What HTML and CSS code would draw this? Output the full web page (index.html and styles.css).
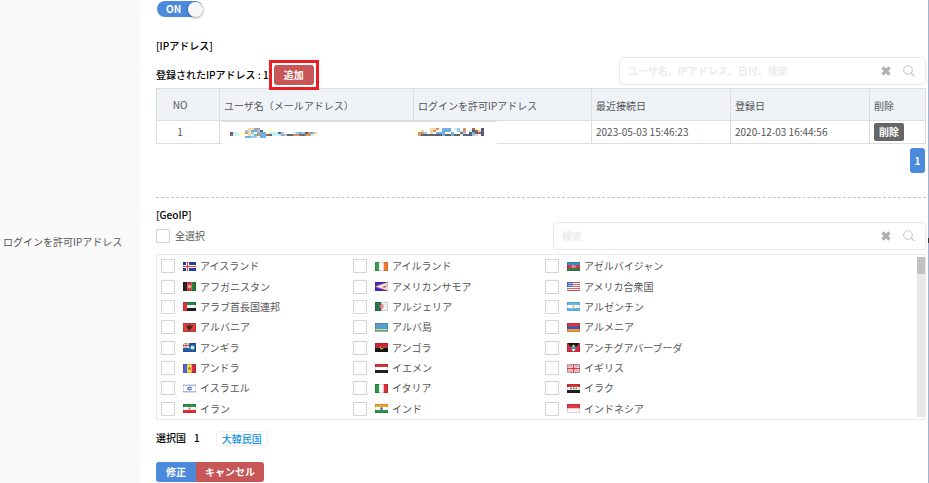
FILE: index.html
```html
<!DOCTYPE html>
<html lang="ja">
<head>
<meta charset="utf-8">
<title>ログインを許可IPアドレス</title>
<link rel="stylesheet" href="styles.css">
<script src="app.js" defer></script>
</head>
<body>
<div class="page">
  <aside class="side">ログインを許可IPアドレス</aside>
  <main class="main">
    <label class="switch"><input type="checkbox" role="switch" checked><span class="switch-text">ON</span><span class="knob"></span></label>

    <h2 class="title title-ip">[IPアドレス]</h2>
    <div class="bar bar-ip">
      <span class="strong">登録されたIPアドレス : 1</span>
      <span class="highlight"><button class="btn red add" type="button">追加</button></span>
      <form class="search search-ip">
        <input type="text" aria-label="ユーザ名、IPアドレス、日付、検索" placeholder="ユーザ名、IPアドレス、日付、検索">
        <button type="reset" aria-label="クリア"><svg width="10" height="10" viewBox="0 0 10 10"><path d="M1.5 1.5l7 7M8.5 1.5l-7 7" stroke="#b0b0b0" stroke-width="3.2"/></svg></button>
        <button type="button" aria-label="検索"><svg width="12" height="12" viewBox="0 0 12 12"><circle cx="5" cy="5" r="4.3" fill="none" stroke="#c6c6c6"/><path d="M8 8l3.5 3" stroke="#c6c6c6" stroke-width="1.2"/></svg></button>
      </form>
    </div>

    <table class="table">
      <colgroup><col class="c-no"><col class="c-user"><col class="c-ip"><col class="c-date"><col class="c-date"><col class="c-del"></colgroup>
      <thead><tr><th class="no">NO</th><th>ユーザ名（メールアドレス）</th><th>ログインを許可IPアドレス</th><th>最近接続日</th><th>登録日</th><th>削除</th></tr></thead>
      <tbody><tr>
        <td class="no">1</td>
        <td class="masked"><div class="mask"><svg class="mosaic" id="mosaic-user" width="87" height="10"></svg><svg class="mosaic" id="mosaic-ip" width="72" height="10"></svg></div></td>
        <td></td><td>2023-05-03 15:46:23</td><td>2020-12-03 16:44:56</td>
        <td><button class="btn grey" type="button">削除</button></td>
      </tr></tbody>
    </table>
    <nav class="pager"><a href="#" aria-current="page">1</a></nav>

    <hr class="rule">
    <h2 class="title title-geo">[GeoIP]</h2>
    <div class="bar bar-geo">
      <label class="check all"><input type="checkbox">全選択</label>
      <form class="search search-geo">
        <input type="text" aria-label="国を検索" placeholder="検索">
        <button type="reset" aria-label="クリア"><svg width="10" height="10" viewBox="0 0 10 10"><path d="M1.5 1.5l7 7M8.5 1.5l-7 7" stroke="#b0b0b0" stroke-width="3.2"/></svg></button>
        <button type="button" aria-label="検索"><svg width="12" height="12" viewBox="0 0 12 12"><circle cx="5" cy="5" r="4.3" fill="none" stroke="#c6c6c6"/><path d="M8 8l3.5 3" stroke="#c6c6c6" stroke-width="1.2"/></svg></button>
      </form>
    </div>

    <div class="list">
      <div class="countries" id="countries"></div>
      <div class="track"><div class="thumb"></div></div>
    </div>

    <div class="selected"><span class="strong">選択国</span><span class="strong count">1</span><a class="tag" href="#">大韓民国</a></div>
    <div class="actions"><button class="btn blue" type="button">修正</button><button class="btn red" type="button">キャンセル</button></div>
    <span class="edge"></span>
  </main>
</div>
</body>
</html>
```

FILE: styles.css
```css
* { box-sizing: border-box; }
body {
  margin: 0;
  background: #fff;
  color: #555;
  font: 10px/16px "Noto Sans CJK JP", "Noto Sans", sans-serif;
}
button, input { font: inherit; color: inherit; }
a { text-decoration: none; }
.page { display: grid; grid-template-columns: 140px 1fr; min-height: 100vh; }
.side { display: flex; align-items: center; padding: 0 3px; background: #fafafa; }
.main {
  position: relative;
  display: flex;
  flex-direction: column;
  padding: 1px 2px 0 16px;
  border-right: 1px solid #9fb4d2;
}
.edge { position: absolute; right: -1px; top: 238px; width: 1px; height: 5px; background: #333; }

.switch {
  display: flex;
  align-items: center;
  justify-content: space-between;
  width: 46px;
  height: 16px;
  margin-left: 1px;
  padding-left: 9px;
  border-radius: 8px;
  background: #4a89dc;
  color: #fff;
  font-weight: 700;
}
.switch input { position: absolute; opacity: 0; }
.knob { width: 15px; height: 15px; border-radius: 50%; background: #f7f7f7; box-shadow: 0 1px 3px #0006, inset 0 0 2px #fff; }

.title { margin: 0; color: #000; font-size: 10px; font-weight: 500; }
.title-ip { margin-top: 21px; }
.title-geo { margin-top: 9px; }
.strong { color: #000; font-weight: 500; }

.bar { display: flex; }
.bar-ip { height: 30px; align-items: center; margin-top: 6px; }
.bar-ip .search { margin-top: -8px; }
.bar-geo { height: 28px; margin-top: -1px; align-items: center; }
.highlight { position: relative; z-index: 1; display: flex; padding: 2px; border: 3px solid #ed1c24; }

.btn { border: 0; padding: 0 10px; height: 20px; line-height: 20px; color: #fff; font-weight: 700; }
.red { background: #c75757; }
.actions .red { padding: 0 9px; }
.blue { background: #4a89dc; }
.grey { display: block; height: 18px; line-height: 18px; padding: 0 5px; border-radius: 2px; background: #666; }
.add { border-radius: 3px; }

.search {
  display: flex;
  align-items: center;
  gap: 12px;
  height: 28px;
  margin-left: auto;
  padding: 0 10px 0 8px;
  border: 1px solid #eaeaea;
  border-radius: 4px;
}
.search-ip { flex: 0 1 307px; }
.search-geo { flex: 0 1 373px; }
.search input { flex: 1; min-width: 0; padding: 0; border: 0; outline: 0; background: none; }
.search input::placeholder { color: #ebebeb; font-weight: 700; opacity: 1; }
.search button { display: flex; padding: 0; border: 0; background: none; }

.table { width: 100%; margin-top: -2px; table-layout: fixed; border-collapse: collapse; }
.c-no { width: 63px; }
.c-user { width: 194px; }
.c-ip { width: 178px; }
.c-date { width: 139px; }
.table th, .table td { padding: 0 4px; border: 1px solid #ddd; text-align: left; font-weight: 400; line-height: 16px; }
.table th { height: 32px; padding-top: 3px; background: #eff3f8; }
.table td { height: 23px; }
.table .no { padding: 0 16px 0 0; text-align: center; }
.table .masked { position: relative; }
.mask { position: absolute; left: 2px; top: -1px; z-index: 1; width: 275px; height: 26px; border-top: 2px solid #ddd; background: #fff; }
.mosaic { position: absolute; top: 6px; left: 8px; }
#mosaic-ip { left: 193px; }

.pager { display: flex; justify-content: flex-end; margin: 4px 1px 0 0; }
.pager a { width: 15px; height: 25px; border-radius: 3px; background: #4a89dc; color: #fff; line-height: 25px; text-align: center; font-weight: 700; }
.rule { width: 100%; margin: 24px 0 0; border: 0; border-top: 1px dashed #c4c4c4; }

.check { display: flex; align-items: center; }
.check input { appearance: none; flex: none; width: 14px; height: 14px; margin: 0; border: 1px solid #d5d5d5; background: #fff; }
.check svg { margin: 0 4px 0 8px; }
.all input { margin-right: 5px; }
.list { display: flex; height: 166px; margin-top: 4px; padding: 1px 0 0 4px; border: 1px solid #eaeaea; }
.countries { flex: 1; display: grid; grid-template: repeat(8, 1fr) / repeat(3, 192px); }
.track { width: 8px; margin: 1px 0 2px; background: #e8e8e8; }
.thumb { height: 17px; background: #c1c1c1; }

.selected { display: flex; align-items: center; margin-top: 10px; height: 16px; }
.count { margin: 0 16px 0 8px; }
.tag { padding: 0 5px; border: 1px solid #eee; border-radius: 3px; color: #1c94e0; line-height: 13px; font-weight: 500; }
.actions { display: flex; margin-top: 16px; }
.actions .btn:first-child { border-radius: 3px 0 0 3px; }
.actions .btn:last-child { border-radius: 0 3px 3px 0; }
```

FILE: app.js
```js
const r = (x, y, w, h, c) => `<rect x="${x}" y="${y}" width="${w}" height="${h}" fill="${c}"/>`;
const p = (d, c) => `<path d="${d}" fill="${c}"/>`;
const l = (d, c, w = 1) => `<path d="${d}" fill="none" stroke="${c}" stroke-width="${w}"/>`;
const o = (x, y, rad, c) => `<circle cx="${x}" cy="${y}" r="${rad}" fill="${c}"/>`;
const vert = (...c) => c.map((k, i) => r(i * 13 / c.length, 0, 13 / c.length, 9, k)).join('');
const horiz = (...c) => c.map((k, i) => r(0, i * 9 / c.length, 13, 9 / c.length, k)).join('');
const jack = l('M0 0L6 5M6 0L0 5', '#fff', 1.5) + l('M3 0V5M0 2.5H6', '#fff', 2) + l('M3 0V5M0 2.5H6', '#e03a3a');

const countries = [
  ['アイスランド', r(0,0,13,9,'#1f459b') + l('M4.5 0V9M0 4.5H13','#fff',3) + l('M4.5 0V9M0 4.5H13','#e33',1)],
  ['アイルランド', vert('#3a9d50','#fff','#f47b30')],
  ['アゼルバイジャン', horiz('#2696c8','#d93644','#39784a') + o(6.2,4.5,1.4,'#f3b5b5') + o(6.7,4.5,.8,'#d93644') + o(8.2,4.5,.6,'#fff')],
  ['アフガニスタン', vert('#222','#d92f35','#267c38') + o(6.5,4.5,1.7,'#f6a0a0')],
  ['アメリカンサモア', r(0,0,13,9,'#3830c5') + p('M13 0V9L0 4.5Z','#f6e4e8') + l('M13 0L0 4.5L13 9','#d55',.7) + p('M7 5L12 3L10 6Z','#a87943')],
  ['アメリカ合衆国', r(0,0,13,9,'#fff') + l('M0 .5H13M0 2.5H13M0 4.5H13M0 6.5H13M0 8.5H13','#e65d60') + r(0,0,6,5,'#5275c9') + l('M1 1.5H6M1 3.5H6','#b8caee',.7)],
  ['アラブ首長国連邦', horiz('#268446','#f4f4f4','#222') + r(0,0,4,9,'#e43236')],
  ['アルジェリア', r(0,0,6.5,9,'#27744f') + r(6.5,0,6.5,9,'#f0f0f0') + o(6.5,4.5,2.3,'#db4550') + o(7.2,4.5,1.6,'#eee') + o(7.2,4.5,1,'#db4550')],
  ['アルゼンチン', horiz('#62b8ed','#fff','#62b8ed') + o(6.5,4.5,1.3,'#edc84b')],
  ['アルバニア', r(0,0,13,9,'#d8433d') + p('M3 2L5 3L6.5 1L8 3L10 2L9 5L8 6L6.5 8L5 6L4 5Z','#522')],
  ['アルバ島', r(0,0,13,9,'#4d9fd4') + l('M0 6.5H13','#d8dc72') + l('M0 8.5H13','#b9cf85') + o(2.5,2.5,1,'#df6570')],
  ['アルメニア', horiz('#dc373f','#4955b5','#f29b32')],
  ['アンギラ', r(0,0,13,9,'#235da8') + jack + o(9.5,4.5,2,'#d7eef4') + o(9.5,4,.8,'#dcae55')],
  ['アンゴラ', r(0,0,13,4.5,'#d71f35') + r(0,4.5,13,4.5,'#161616') + o(6.7,4.8,1.8,'#d5a928') + o(7,4.3,1,'#521')],
  ['アンチグアバーブーダ', r(0,0,13,9,'#d92c3c') + p('M1 0H12L6.5 9Z','#181818') + p('M3 3.5H10L8.5 6H4.5Z','#458bd4') + p('M4.5 6H8.5L6.5 9Z','#fff') + o(6.5,3,1.2,'#f2d043')],
  ['アンドラ', vert('#5568d0','#f7dc3e','#d5283c') + o(6.5,4.5,1.5,'#c97942')],
  ['イエメン', horiz('#dc3036','#fff','#202020')],
  ['イギリス', r(0,0,13,9,'#7d8fd0') + l('M0 0L13 9M13 0L0 9','#f2dfe7',2.5) + l('M0 0L13 9M13 0L0 9','#e16870',.8) + l('M6.5 0V9M0 4.5H13','#fff',3) + l('M6.5 0V9M0 4.5H13','#e3323c',1.6)],
  ['イスラエル', r(0,0,13,9,'#fff') + l('M0 1.5H13M0 7.5H13','#a5b9ee') + l('M6.5 2.5L8.5 5.5H4.5ZM6.5 6.5L4.5 3.5H8.5Z','#4967d0',.7)],
  ['イタリア', vert('#279846','#fff','#dc2f38')],
  ['イラク', horiz('#dc3037','#f4f4f4','#202020') + l('M3 4.5H5M6 4.5H7.5M8.5 4.5H10','#3a9650',1.6)],
  ['イラン', horiz('#279447','#fff','#df3036') + o(6.5,4.5,1.2,'#e67676')],
  ['インド', horiz('#f0a62b','#fff','#309244') + o(6.5,4.5,1.5,'#5870b0')],
  ['インドネシア', r(0,0,13,4.5,'#df3842') + r(0,4.5,13,4.5,'#f8f8f8')]
];
document.getElementById('countries').innerHTML = countries.map(([name, art]) =>
  `<label class="check"><input type="checkbox"><svg width="13" height="9" viewBox="0 0 13 9">${art}<rect x=".5" y=".5" width="12" height="8" fill="none" stroke="#0002"/></svg>${name}</label>`).join('');

// Pixelated cells that stand in for private values: one string per row, one letter per 3px cell.
const colors = { b: '#6cb0e5', n: '#55568a', g: '#62656c', r: '#a86450', o: '#d99362', y: '#ffffcf', t: '#f2d5a8', c: '#c5f3fa', s: '#9fcbe5', a: '#a8a0a5' };
const mosaic = (id, rows) => {
  document.getElementById(id).innerHTML = rows.map((row, j) => [...row].map((k, i) =>
    colors[k] ? r(i * 3, j * 2, 3, 2, colors[k]) : '').join('')).join('');
};
mosaic('mosaic-user', [
  '......ttaa...y...............',
  '.....stbbsg..yy..............',
  'nccyyotsyabbycccgs...csbsnobt',
  'rccyy.tcbobbrgcccasggoorgoocy',
  '.....bbss.bb.................'
]);
mosaic('mosaic-ip', [
  'y....tto.bbb.cs.o..ryyn',
  'yyt..toy.bbb..sco.cnrtn',
  '.aos.t.bbby.b..rs.gbgrn',
  'yogngggngbggbggcggnst.n'
]);
```
